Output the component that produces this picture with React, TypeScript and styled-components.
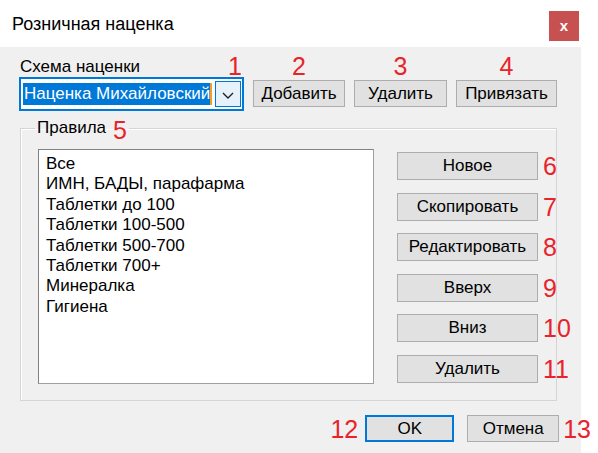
import React from "react";
import styled, { createGlobalStyle } from "styled-components";

const GlobalStyle = createGlobalStyle`
  html, body {
    margin: 0;
    padding: 0;
    background: #ffffff;
  }
  body {
    font-family: "Liberation Sans", Arial, sans-serif;
    color: #000;
  }
`;

const rules = [
  "Все",
  "ИМН, БАДЫ, парафарма",
  "Таблетки до 100",
  "Таблетки 100-500",
  "Таблетки 500-700",
  "Таблетки 700+",
  "Минералка",
  "Гигиена",
];

const sideButtons = [
  { label: "Новое", num: 6 },
  { label: "Скопировать", num: 7 },
  { label: "Редактировать", num: 8 },
  { label: "Вверх", num: 9 },
  { label: "Вниз", num: 10 },
  { label: "Удалить", num: 11 },
];

const App: React.FC = () => {
  return (
    <>
      <GlobalStyle />
      <Window>
        <TitleBar>
          <Title>Розничная наценка</Title>
          <CloseButton>x</CloseButton>
        </TitleBar>
        <Body>
          <TopRow>
            <ComboColumn>
              <ComboHeader>
                <Label>Схема наценки</Label>
                <Num>1</Num>
              </ComboHeader>
              <Combo>
                <Selected>Наценка Михайловский</Selected>
                <DropButton>
                  <svg width="12" height="7" viewBox="0 0 12 7">
                    <polyline
                      points="1,1 6,6 11,1"
                      fill="none"
                      stroke="#222"
                      strokeWidth="1.4"
                    />
                  </svg>
                </DropButton>
              </Combo>
            </ComboColumn>
            <ButtonColumn>
              <Num>2</Num>
              <TopButton $w={92}>Добавить</TopButton>
            </ButtonColumn>
            <ButtonColumn>
              <Num>3</Num>
              <TopButton $w={93}>Удалить</TopButton>
            </ButtonColumn>
            <ButtonColumn>
              <Num>4</Num>
              <TopButton $w={101}>Привязать</TopButton>
            </ButtonColumn>
          </TopRow>

          <Group>
            <Legend>
              Правила<LegendNum>5</LegendNum>
            </Legend>
            <GroupInner>
              <ListBox>
                {rules.map((r) => (
                  <ListItem key={r}>{r}</ListItem>
                ))}
              </ListBox>
              <SideColumn>
                {sideButtons.map((b) => (
                  <SideRow key={b.num}>
                    <SideButton>{b.label}</SideButton>
                    <SideNum>{b.num}</SideNum>
                  </SideRow>
                ))}
              </SideColumn>
            </GroupInner>
          </Group>

          <BottomRow>
            <Num>12</Num>
            <OkButton>OK</OkButton>
            <CancelButton>Отмена</CancelButton>
            <Num>13</Num>
          </BottomRow>
        </Body>
      </Window>
    </>
  );
};

const Window = styled.div`
  width: 598px;
  height: 453px;
  overflow: hidden;
  background: #ffffff;
`;

const TitleBar = styled.div`
  height: 47px;
  display: flex;
  align-items: center;
  justify-content: space-between;
  padding-left: 12px;
  box-sizing: border-box;
`;

const Title = styled.div`
  font-size: 18px;
  line-height: 22px;
  margin-top: 1px;
`;

const CloseButton = styled.div`
  width: 30px;
  height: 30px;
  margin-right: 19px;
  margin-top: 5px;
  background: #c75050;
  color: #fff;
  font-weight: bold;
  font-size: 15px;
  display: flex;
  align-items: center;
  justify-content: center;
  line-height: 1;
  padding-bottom: 2px;
  box-sizing: border-box;
`;

const Body = styled.div`
  width: 581px;
  height: 406px;
  background: #f0f0f0;
  padding: 8px 0 0 19px;
  box-sizing: border-box;
`;

const TopRow = styled.div`
  display: flex;
  align-items: flex-start;
  gap: 9px;
`;

const ComboColumn = styled.div`
  width: 225px;
  display: flex;
  flex-direction: column;
`;

const ComboHeader = styled.div`
  height: 22px;
  display: flex;
  align-items: flex-end;
  justify-content: space-between;
  padding: 0 2px 0 1px;
`;

const Label = styled.div`
  font-size: 17px;
  line-height: 20px;
`;

const Num = styled.div`
  color: #e8232a;
  font-size: 25px;
  line-height: 22px;
  height: 22px;
`;

const Combo = styled.div`
  height: 34px;
  border: 2px solid #0078d7;
  box-sizing: border-box;
  background: #fff;
  display: flex;
  align-items: center;
  padding: 0 1px 0 2px;
  gap: 3px;
`;

const Selected = styled.div`
  flex: 1;
  height: 22px;
  background: #0078d7;
  color: #fff;
  font-size: 17px;
  line-height: 22px;
  white-space: nowrap;
  overflow: hidden;
  padding-left: 1px;
  border-right: 2px solid #f39c2c;
`;

const DropButton = styled.div`
  width: 26px;
  height: 26px;
  box-sizing: border-box;
  border: 1px solid #0078d7;
  background: #e5f1fb;
  display: flex;
  align-items: center;
  justify-content: center;
  padding-top: 2px;
`;

const ButtonColumn = styled.div`
  display: flex;
  flex-direction: column;
  align-items: center;
`;

const Button = styled.div`
  height: 27px;
  box-sizing: border-box;
  background: #e1e1e1;
  border: 1px solid #adadad;
  font-size: 17px;
  line-height: 25px;
  text-align: center;
  white-space: nowrap;
`;

const TopButton = styled(Button)<{ $w: number }>`
  width: ${(p) => p.$w}px;
  margin-top: 3px;
`;

const Group = styled.fieldset`
  margin: 6px 0 0 1px;
  width: 537px;
  height: 284px;
  box-sizing: border-box;
  border: 1px solid #d5d5d5;
  box-shadow: inset 1px 1px 0 #ffffff;
  padding: 10px 0 0 17px;
  min-width: 0;
`;

const Legend = styled.legend`
  font-size: 17px;
  line-height: 22px;
  padding: 0 2px;
  margin-left: -3px;
  display: flex;
  align-items: center;
`;

const LegendNum = styled.span`
  color: #e8232a;
  font-size: 25px;
  line-height: 22px;
  margin-left: 7px;
  position: relative;
  top: 2px;
`;

const GroupInner = styled.div`
  display: flex;
  align-items: flex-start;
  gap: 23px;
`;

const ListBox = styled.div`
  width: 336px;
  height: 235px;
  flex: none;
  box-sizing: border-box;
  background: #fff;
  border: 1px solid #a0a0a0;
  border-top-color: #828282;
  border-left-color: #828282;
  padding: 4px 0 0 7px;
`;

const ListItem = styled.div`
  font-size: 17px;
  line-height: 20.4px;
  white-space: nowrap;
`;

const SideColumn = styled.div`
  flex: none;
  display: flex;
  flex-direction: column;
  gap: 12.6px;
  margin-top: 3px;
`;

const SideRow = styled.div`
  display: flex;
  align-items: center;
`;

const SideButton = styled(Button)`
  width: 141px;
  height: 28px;
  line-height: 26px;
`;

const SideNum = styled(Num)`
  margin-left: 5px;
  height: auto;
  line-height: 28px;
`;

const BottomRow = styled.div`
  width: 572px;
  margin-top: 14px;
  display: flex;
  justify-content: flex-end;
  align-items: center;
  & > :nth-child(1) {
    margin-right: 7px;
  }
  & > :nth-child(3) {
    margin-left: 13px;
    margin-right: 4px;
  }
`;

const OkButton = styled(Button)`
  width: 89px;
  border: 2px solid #0078d7;
  line-height: 23px;
`;

const CancelButton = styled(Button)`
  width: 92px;
`;

export default App;
